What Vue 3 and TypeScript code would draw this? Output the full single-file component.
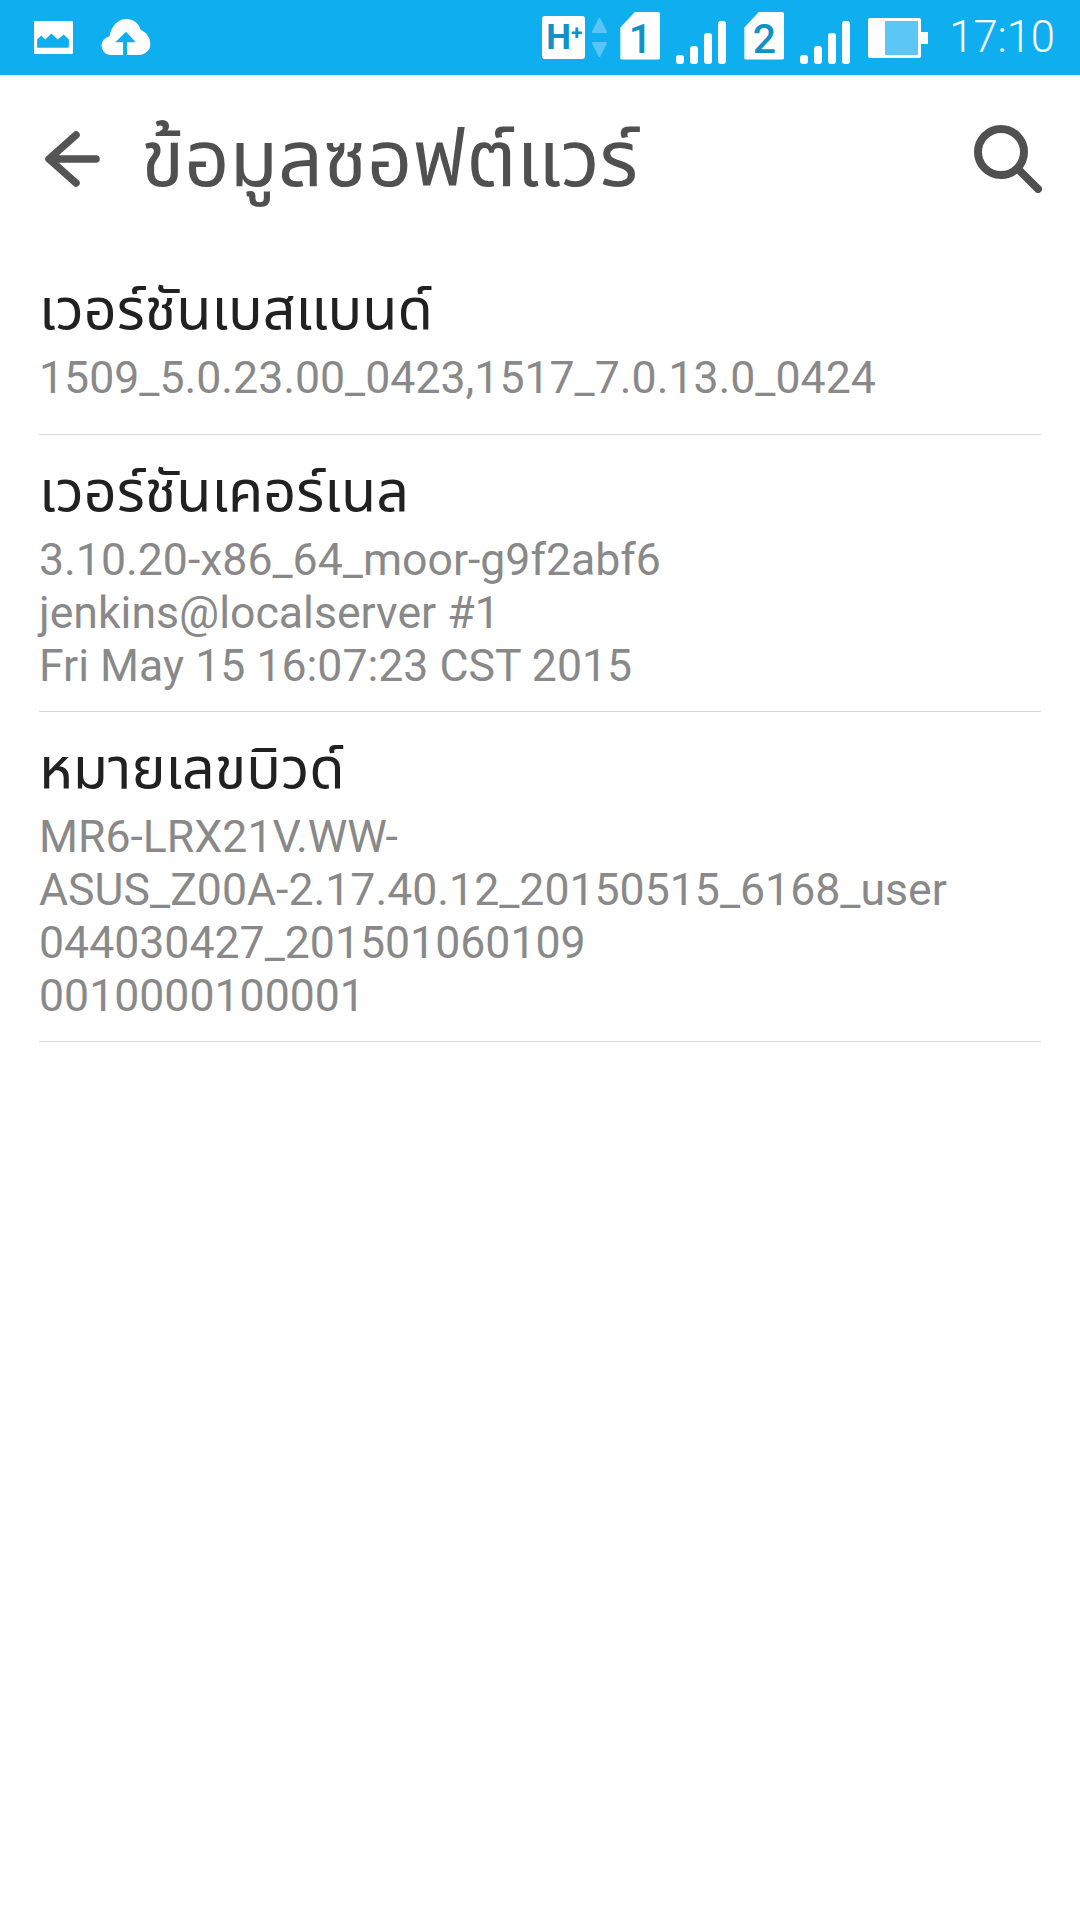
<script setup lang="ts">
interface InfoRow {
  title: string
  lines: string[]
}

const rows: InfoRow[] = [
  {
    title: "เวอร์ชันเบสแบนด์",
    lines: ["1509_5.0.23.00_0423,1517_7.0.13.0_0424"],
  },
  {
    title: "เวอร์ชันเคอร์เนล",
    lines: ["3.10.20-x86_64_moor-g9f2abf6", "jenkins@localserver #1", "Fri May 15 16:07:23 CST 2015"],
  },
  {
    title: "หมายเลขบิวด์",
    lines: ["MR6-LRX21V.WW-", "ASUS_Z00A-2.17.40.12_20150515_6168_user", "044030427_201501060109", "0010000100001"],
  },
]
</script>

<template>
  <div class="screen">
    <header class="status-bar">
      <div class="status-left">
        <svg width="39" height="33" viewBox="0 0 38 32">
          <path fill="#fff" fill-rule="evenodd" d="M1 0h36a1 1 0 0 1 1 1v30a1 1 0 0 1-1 1H1a1 1 0 0 1-1-1V1a1 1 0 0 1 1-1zM5 26h28a1 1 0 0 0 1-1v-7l-5-5-6 5-6-6-6 6-4-4-4 4v7a1 1 0 0 0 1 1z" />
        </svg>
        <svg width="50" height="37" viewBox="0 0 50 38">
          <path fill="#fff" d="M22 37H10C4 37 0 33 0 27c0-4 3-8 8-9C10 7 17 0 25 0c7 0 13 4 15 11 6 3 10 8 10 15 0 6-5 11-12 11H26V24h9L25 13 14 24h8z" />
        </svg>
      </div>
      <div class="status-right">
        <div class="net">
          <span class="net-box">H<sup>+</sup></span>
          <svg width="15" height="39" viewBox="0 0 15 39">
            <path fill="#5cc4f5" stroke="#5cc4f5" stroke-width="2" stroke-linejoin="round" d="M7.5 1L14 14H1zM1 25h13l-6.500 13z" />
          </svg>
        </div>
        <div class="sim">
          <span class="sim-card">1</span>
          <svg width="50" height="43" viewBox="0 0 50 43">
            <g fill="#fff">
              <rect x="0" y="34" width="8" height="9" rx="3" />
              <rect x="14" y="25" width="8" height="18" rx="3" />
              <rect x="28" y="12" width="8" height="31" rx="3" />
              <rect x="42" y="0" width="8" height="43" rx="3" />
            </g>
          </svg>
        </div>
        <div class="sim">
          <span class="sim-card">2</span>
          <svg width="50" height="43" viewBox="0 0 50 43">
            <g fill="#fff">
              <rect x="0" y="34" width="8" height="9" rx="3" />
              <rect x="14" y="25" width="8" height="18" rx="3" />
              <rect x="28" y="12" width="8" height="31" rx="3" />
              <rect x="42" y="0" width="8" height="43" rx="3" />
            </g>
          </svg>
        </div>
        <svg class="battery" width="60" height="40" viewBox="0 0 60 40">
          <path fill="#fff" d="M2 0h49a2 2 0 0 1 2 2v12h7v12h-7v12a2 2 0 0 1-2 2H2a2 2 0 0 1-2-2V2a2 2 0 0 1 2-2z" />
          <rect x="17" y="3" width="33" height="34" fill="#5cc6f6" />
        </svg>
        <span class="clock">17:10</span>
      </div>
    </header>

    <div class="toolbar">
      <svg class="back" width="56" height="56" viewBox="0 0 56 56">
        <path d="M52 28H6M32 4L5 28l27 24" fill="none" stroke="#545454" stroke-width="7.500" stroke-linecap="round" stroke-linejoin="round" />
      </svg>
      <h1 class="title">ข้อมูลซอฟต์แวร์</h1>
      <svg class="search" width="68" height="68" viewBox="0 0 68 68">
        <circle cx="27" cy="27" r="23" fill="none" stroke="#505050" stroke-width="8" />
        <path d="M45 45l19 19" fill="none" stroke="#505050" stroke-width="8" stroke-linecap="round" />
      </svg>
    </div>

    <section class="list">
      <article v-for="row in rows" :key="row.title" class="row">
        <h2 class="row-title">{{ row.title }}</h2>
        <p v-for="line in row.lines" :key="line" class="row-line">{{ line }}</p>
      </article>
    </section>
  </div>
</template>

<style scoped>
.screen {
  width: 1080px;
  height: 1920px;
  background: #fff;
  font-family: Roboto, "Noto Sans", sans-serif;
  overflow: hidden;
}

.status-bar {
  display: flex;
  justify-content: space-between;
  align-items: center;
  height: 75px;
  padding: 0 25px 0 34px;
  box-sizing: border-box;
  background: #0fafef;
}

.status-left {
  display: flex;
  align-items: center;
  gap: 28px;
}

.status-right {
  display: flex;
  align-items: center;
}

.net {
  display: flex;
  align-items: center;
  gap: 7px;
  margin-right: 13px;
}

.net-box {
  display: block;
  width: 43px;
  height: 43px;
  border-radius: 3px;
  background: #fff;
  color: #1191c7;
  font-size: 35px;
  font-weight: 700;
  line-height: 43px;
  padding-left: 4px;
  box-sizing: border-box;
  white-space: nowrap;
}

.net-box sup {
  font-size: 21px;
  line-height: 0;
  vertical-align: 9px;
}

.sim {
  display: flex;
  align-items: flex-end;
  gap: 16px;
  margin-right: 18px;
}

.sim-card {
  display: block;
  width: 40px;
  height: 48px;
  margin-bottom: 4px;
  padding-top: 6px;
  box-sizing: border-box;
  background: #fff;
  border-radius: 2px;
  clip-path: polygon(15px 0, 100% 0, 100% 100%, 0 100%, 0 16px);
  color: #1191c7;
  font-size: 41px;
  font-weight: 500;
  line-height: 42px;
  text-align: center;
}

.battery {
  margin-right: 21px;
}

.clock {
  color: #fff;
  font-size: 43.500px;
  font-weight: 300;
}

.toolbar {
  display: flex;
  align-items: center;
  height: 168px;
  padding: 0 38px 0 44px;
}

.back {
  flex: none;
}

.title {
  flex: 1;
  margin: 5px 0 0 41px;
  color: #505050;
  font-size: 79px;
  font-weight: 400;
  line-height: 100px;
  font-family: "Noto Sans Thai", "Noto Sans", Roboto, sans-serif;
}

.list {
  padding: 10px 39px 0;
}

.row {
  padding: 19px 0 18px;
  border-bottom: 1px solid #d6d6d6;
}

.row:first-child {
  padding-bottom: 29px;
}

.row-title {
  margin: 0;
  color: #212121;
  font-size: 57.500px;
  font-weight: 400;
  line-height: 80px;
  font-family: "Noto Sans Thai", "Noto Sans", Roboto, sans-serif;
}

.row-line {
  margin: 0;
  color: #898989;
  font-size: 44.620px;
  line-height: 53px;
}
</style>
